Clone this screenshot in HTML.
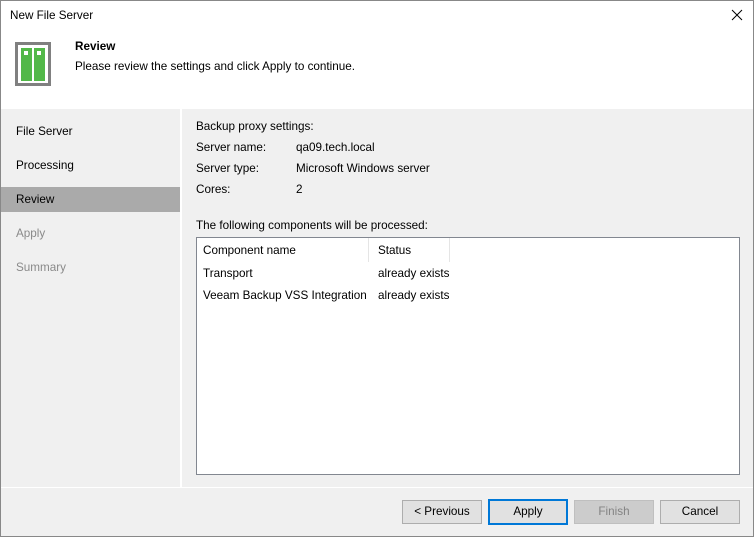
<!DOCTYPE html>
<html><head><style>
body{margin:0;width:754px;height:537px;overflow:hidden;font-family:"Liberation Sans",sans-serif;font-size:11.7px;color:#000;background:#fff}
.win{position:absolute;left:0;top:0;width:752px;height:535px;border:1px solid #888;background:#fff}
.t{position:absolute;white-space:nowrap}
.content{position:absolute;left:0;top:108px;width:752px;height:427px;background:#f0f0f0}
.btn{position:absolute;top:499px;height:22px;width:78px;border:1px solid #adadad;background:#e1e1e1;text-align:center;line-height:22px}
</style></head><body>
<div class="win">
<div class="t" style="left:9px;top:8px;">New File Server</div>
<svg class="t" style="left:730px;top:8px" width="12" height="12"><path d="M1 1L11 11M11 1L1 11" stroke="#000" stroke-width="1"/></svg>
<div class="t" style="left:14px;top:41px;width:30px;height:38px;border:3px solid #808080;background:#fff"></div>
<div class="t" style="left:20px;top:47px;width:11px;height:33px;background:#52b848"></div>
<div class="t" style="left:33px;top:47px;width:11px;height:33px;background:#52b848"></div>
<div class="t" style="left:23px;top:50px;width:4px;height:4px;background:#fff"></div>
<div class="t" style="left:36px;top:50px;width:4px;height:4px;background:#fff"></div>
<div class="t" style="left:74px;top:39px;font-weight:bold">Review</div>
<div class="t" style="left:74px;top:59px">Please review the settings and click Apply to continue.</div>
<div class="content">
<div class="t" style="left:179px;top:0;width:2px;height:378px;background:#fff"></div>
<div class="t" style="left:0;top:378px;width:752px;height:1px;background:#fff"></div>
<div class="t" style="left:15px;top:16px">File Server</div>
<div class="t" style="left:15px;top:50px">Processing</div>
<div class="t" style="left:0;top:78px;width:179px;height:25px;background:#aaa"></div>
<div class="t" style="left:15px;top:84px">Review</div>
<div class="t" style="left:15px;top:118px;color:#8a8a8a">Apply</div>
<div class="t" style="left:15px;top:152px;color:#8a8a8a">Summary</div>
<div class="t" style="left:195px;top:11px">Backup proxy settings:</div>
<div class="t" style="left:195px;top:32px">Server name:</div><div class="t" style="left:295px;top:32px">qa09.tech.local</div>
<div class="t" style="left:195px;top:53px">Server type:</div><div class="t" style="left:295px;top:53px">Microsoft Windows server</div>
<div class="t" style="left:195px;top:74px">Cores:</div><div class="t" style="left:295px;top:74px">2</div>
<div class="t" style="left:195px;top:110px">The following components will be processed:</div>
<div class="t" style="left:195px;top:128px;width:542px;height:236px;border:1px solid #828790;background:#fff">
<div class="t" style="left:171px;top:0;width:1px;height:24px;background:#e5e5e5"></div>
<div class="t" style="left:252px;top:0;width:1px;height:24px;background:#e5e5e5"></div>
<div class="t" style="left:6px;top:6px">Component name</div>
<div class="t" style="left:181px;top:6px">Status</div>
<div class="t" style="left:6px;top:29px">Transport</div>
<div class="t" style="left:181px;top:29px">already exists</div>
<div class="t" style="left:6px;top:51px">Veeam Backup VSS Integration</div>
<div class="t" style="left:181px;top:51px">already exists</div>
</div>
</div>
<div class="btn" style="left:401px">&lt; Previous</div>
<div class="btn" style="left:487px;border:2px solid #0078d7;top:498px;width:76px">Apply</div>
<div class="btn" style="left:573px;background:#ccc;border-color:#bfbfbf;color:#838383">Finish</div>
<div class="btn" style="left:659px">Cancel</div>
</div>
</body></html>
